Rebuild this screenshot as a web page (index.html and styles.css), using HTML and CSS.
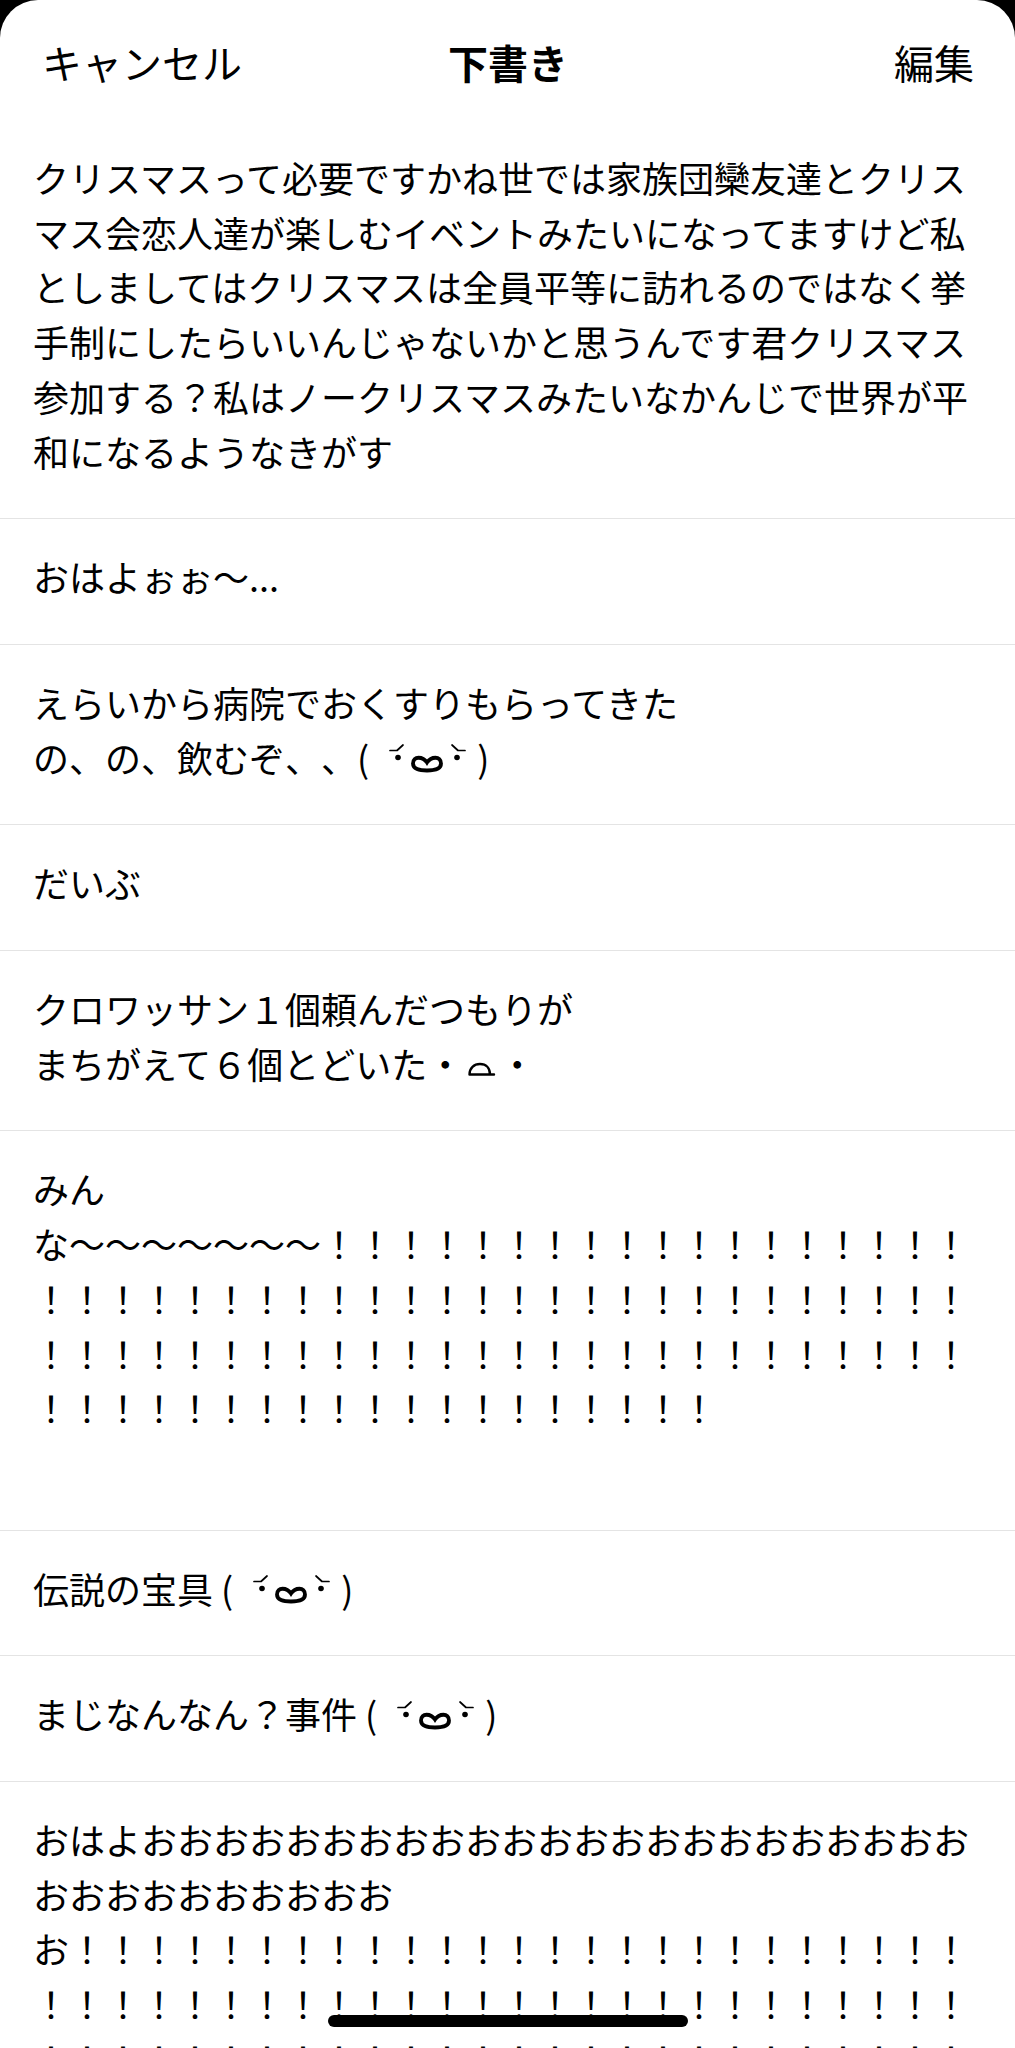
FILE: index.html
```
<!DOCTYPE html>
<html lang="ja">
<head>
    <meta charset="UTF-8">
    <meta name="viewport" content="width=device-width, initial-scale=1.0">
    <title>下書き</title>
    <link rel="stylesheet" href="styles.css">
</head>
<body>
    <div class="sheet">
        <header class="nav-bar">
            <span class="nav-cancel">キャンセル</span>
            <span class="nav-title">下書き</span>
            <span class="nav-edit">編集</span>
        </header>

        <div class="drafts">
            <p class="note">クリスマスって必要ですかね世では家族団欒友達とクリスマス会恋人達が楽しむイベントみたいになってますけど私としましてはクリスマスは全員平等に訪れるのではなく挙手制にしたらいいんじゃないかと思うんです君クリスマス参加する？私はノークリスマスみたいなかんじで世界が平和になるようなきがす</p>

            <p class="note">おはよぉぉ〜...</p>

            <p class="note">えらいから病院でおくすりもらってきた<br>の、の、飲むぞ、、(<svg class="face" viewBox="0 0 108 36" role="img" aria-label="᷇ࡇ᷆"><path class="tick" d="M21 9.5H28L34 4"/><circle cx="29" cy="16.5" r="2.8"/><path class="mouth" d="M58 21.5C54 15.5 44 14.5 44 22.5C44 28 50 29.5 58 29.5C66 29.5 72 28 72 22.5C72 14.5 62 15.5 58 21.5Z"/><circle cx="88" cy="16.5" r="2.8"/><path class="tick" d="M83 4L89 9.5H96"/></svg>)</p>

            <p class="note">だいぶ</p>

            <p class="note">クロワッサン１個頼んだつもりが<br>まちがえて６個とどいた・<svg class="face-small" viewBox="0 0 36 36" role="img" aria-label="ᴖ"><path class="mouth-small" d="M6.5 27.5C6.5 21 11 17 17 17C23 17 27 21 27 27.5M6.5 27.5H31"/></svg>・</p>

            <p class="note">みん<br>な〜〜〜〜〜〜〜！！！！！！！！！！！！！！！！！！<br>！！！！！！！！！！！！！！！！！！！！！！！！！！<br>！！！！！！！！！！！！！！！！！！！！！！！！！！<br>！！！！！！！！！！！！！！！！！！！<br><br></p>

            <p class="note">伝説の宝具 (<svg class="face" viewBox="0 0 108 36" role="img" aria-label="᷇ࡇ᷆"><path class="tick" d="M21 9.5H28L34 4"/><circle cx="29" cy="16.5" r="2.8"/><path class="mouth" d="M58 21.5C54 15.5 44 14.5 44 22.5C44 28 50 29.5 58 29.5C66 29.5 72 28 72 22.5C72 14.5 62 15.5 58 21.5Z"/><circle cx="88" cy="16.5" r="2.8"/><path class="tick" d="M83 4L89 9.5H96"/></svg>)</p>

            <p class="note">まじなんなん？事件 (<svg class="face" viewBox="0 0 108 36" role="img" aria-label="᷇ࡇ᷆"><path class="tick" d="M21 9.5H28L34 4"/><circle cx="29" cy="16.5" r="2.8"/><path class="mouth" d="M58 21.5C54 15.5 44 14.5 44 22.5C44 28 50 29.5 58 29.5C66 29.5 72 28 72 22.5C72 14.5 62 15.5 58 21.5Z"/><circle cx="88" cy="16.5" r="2.8"/><path class="tick" d="M83 4L89 9.5H96"/></svg>)</p>

            <p class="note">おはよおおおおおおおおおおおおおおおおおおおおおおお<br>おおおおおおおおおお<br>お！！！！！！！！！！！！！！！！！！！！！！！！！<br>！！！！！！！！！！！！！！！！！！！！！！！！！！<br>！！！！！！！！！！！！！！！！！！！！！！！！！！<br>！！！！！！！！！！！！！！！！！！！！！！！！！！</p>
        </div>
    </div>

    <div class="home-indicator"></div>
</body>
</html>
```

FILE: styles.css
```
body {
    margin: 0;
    height: 100vh;
    overflow: hidden;
    background-color: #000;
    color: #000;
    font-family: "Noto Sans CJK JP", sans-serif;
    text-spacing-trim: space-all;
}
.sheet {
    min-height: 100vh;
    background-color: #fff;
    border-radius: 38px 38px 0 0;
}
.nav-bar {
    display: grid;
    grid-template-columns: 1fr auto 1fr;
    align-items: center;
    padding: 38px 41px 34px 42px;
    font-size: 40px;
    line-height: 48px;
}
.nav-title {
    font-weight: 700;
}
.nav-edit {
    justify-self: end;
}
.note {
    margin: 0;
    padding: 30px 34px 40px 33px;
    font-size: 36px;
    line-height: 54.7px;
    border-bottom: 1px solid #e4e4e4;
}
.face {
    width: 108px;
    height: 1em;
    vertical-align: -0.12em;
}
.face-small {
    width: 1em;
    height: 1em;
    vertical-align: -0.12em;
}
.face circle {
    fill: #000;
}
.face .tick {
    fill: none;
    stroke: #000;
    stroke-width: 1.7;
    stroke-linecap: round;
    stroke-linejoin: round;
}
.face .mouth {
    fill: none;
    stroke: #000;
    stroke-width: 3.8;
}
.face-small .mouth-small {
    fill: none;
    stroke: #000;
    stroke-width: 2.4;
    stroke-linecap: round;
}
.home-indicator {
    position: fixed;
    left: 50%;
    bottom: 21px;
    width: 360px;
    height: 12px;
    margin-left: -180px;
    background-color: #000;
    border-radius: 6px;
}
```
